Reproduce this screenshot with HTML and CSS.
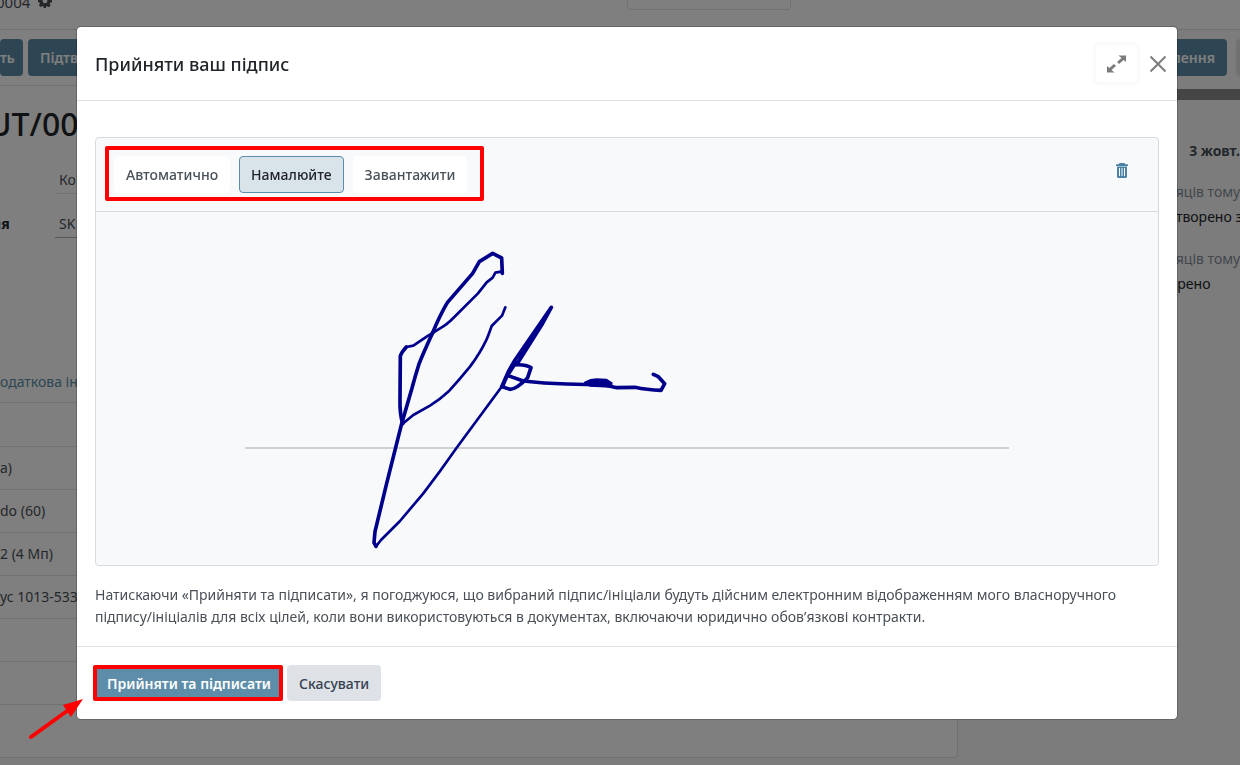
FILE: index.html
```html
<!DOCTYPE html>
<html lang="uk">
<head>
  <meta charset="UTF-8">
  <meta name="viewport" content="width=device-width, initial-scale=1.0">
  <title>Прийняти ваш підпис</title>
  <link rel="stylesheet" href="styles.css">
</head>
<body>

<div class="page">
  <header class="navbar">
    <div class="breadcrumb">
      <span>0004</span>
      <svg class="gear" viewBox="0 0 16 16" aria-hidden="true"><path fill-rule="evenodd" d="M6.6 0h2.8l.4 2.1 1.3.6L13 1.5l1.8 2-1.1 1.8.5 1.3 1.8.4v2.5l-2 .5-.6 1.3 1.1 1.9-2 1.9-1.8-1.2-1.3.5-.5 1.9H6.600l-.5-2-1.300-.5-1.900 1.100-1.900-2 1.200-1.800-.5-1.300L0 9.500V6.900l1.900-.4.6-1.300L1.300 3.400l2-1.900 1.800 1.200 1.200-.6zM8 5.300a2.700 2.700 0 1 0 0 5.400 2.700 2.700 0 0 0 0-5.400z"/></svg>
    </div>
    <div class="pager"></div>
  </header>

  <div class="columns">
    <main class="form">
      <div class="statusbar">
        <button class="btn btn-primary btn-cut">ть</button>
        <button class="btn btn-primary">Підтвердити</button>
      </div>
      <div class="sheet">
        <h1>UT/00</h1>
        <div class="fields">
          <span></span><span class="value light">Ко</span>
          <b>ня</b><span class="value">SK</span>
        </div>
        <div class="tabs"><a href="#">одаткова ін</a></div>
        <table class="lines">
          <tr><td></td></tr>
          <tr><td>а)</td></tr>
          <tr><td>do (60)</td></tr>
          <tr><td>2 (4 Мп)</td></tr>
          <tr><td>ус 1013-533</td></tr>
          <tr><td></td></tr>
          <tr><td></td></tr>
        </table>
      </div>
    </main>

    <aside class="chatter">
      <div class="chatter-top">
        <button class="btn btn-primary">повідомлення</button>
        <button class="btn btn-secondary">Нотатка</button>
      </div>
      <div class="thread">
        <div class="date">3 жовт.</div>
        <p class="ago">сяців тому</p>
        <p class="msg">створено з</p>
        <p class="ago">сяців тому</p>
        <p class="msg">орено</p>
      </div>
    </aside>
  </div>
</div>

<div class="overlay">
  <div class="modal" role="dialog" aria-labelledby="modal-title">
    <header class="modal-header">
      <h2 id="modal-title">Прийняти ваш підпис</h2>
      <button class="expand" aria-label="Розгорнути">
        <svg viewBox="0 0 20 18"><path d="M12 0h8v7l-2.500-2.200-4.800 4.200-2.200-2 4.800-4.300zM0 18v-7l2.500 2.200L7.300 9l2.200 2-4.800 4.300L8 18z"/></svg>
      </button>
      <button class="close" aria-label="Закрити">
        <svg viewBox="0 0 18 18"><path d="M1.500 1.500l15 15M16.500 1.500l-15 15"/></svg>
      </button>
    </header>

    <div class="modal-body">
      <div class="card">
        <div class="card-header">
          <div class="modes">
            <button class="mode">Автоматично</button>
            <button class="mode active">Намалюйте</button>
            <button class="mode">Завантажити</button>
          </div>
          <button class="trash" aria-label="Очистити">
            <svg viewBox="0 0 12 15"><path fill-rule="evenodd" d="M3.500 0h5l.8 1.200H12v1.700H0V1.200h2.700zM1 3.500h10v10c0 .9-.5 1.500-1.300 1.500H2.300C1.500 15 1 14.400 1 13.500zM3 5v8h1V5zm2.500 0v8h1V5zM8 5v8h1V5z"/></svg>
          </button>
        </div>
        <div class="canvas">
          <div class="baseline"></div>
          <svg class="signature" viewBox="-762 -54 3186 1059" role="img" aria-label="Підпис">
            <path d="M466 232L456 257 425 288Q412 325 408 332 390 370 360 410 330 447 298 482 270 508 240 527L190 555 158 581"/>
            <path class="thick" d="M158 581Q149 550 150 510L151 378Q155 366 169 351"/>
            <path d="M169 351L190 347 230 320 275 292Q290 284 310 264L384 190 410 157 428 143 436 128 457 124"/>
            <path class="thick" d="M457 130L455 84 428 70 388 95 368 130 292 218Q270 255 248 308"/>
            <path class="thick" d="M248 308Q215 380 207 402 195 440 185 478L155 581 110 760 75 905 72 938 78 949"/>
            <path d="M78 949L93 930 150 873 220 790Q270 725 320 653L455 470"/>
            <path class="thick" d="M455 470L475 425 495 390 604 232 575 285 505 396"/>
            <path class="thick" d="M492 405Q525 402 543 413L533 443Q500 477 480 478L457 470 470 440 498 397"/>
            <path class="thick" d="M474 437L520 453Q580 460 650 462L765 465 800 473 855 472Q890 480 933 481L944 461 925 440 910 433"/>
            <path class="blot" d="M706 458Q722 449 740 449L768 450 784 460 782 469 720 466z"/>
          </svg>
        </div>
      </div>
      <p class="terms">Натискаючи «Прийняти та підписати», я погоджуюся, що вибраний підпис/ініціали будуть дійсним електронним відображенням мого власноручного підпису/ініціалів для всіх цілей, коли вони використовуються в документах, включаючи юридично обов’язкові контракти.</p>
    </div>

    <footer class="modal-footer">
      <button class="btn btn-primary accept">Прийняти та підписати</button>
      <button class="btn btn-secondary">Скасувати</button>
      <svg class="arrow" viewBox="0 0 54 42" aria-hidden="true"><path class="shaft" d="M2 39L38 13"/><path d="M54 1L34 7l8 12z"/></svg>
    </footer>
  </div>
</div>

</body>
</html>
```
FILE: styles.css
```css
* { margin: 0; padding: 0; box-sizing: border-box; }

body {
  font-family: "Noto Sans", sans-serif;
  font-size: 14px;
  color: #495057;
  background: #f8f9fa;
  height: 100vh;
  overflow: hidden;
}

button {
  font: inherit;
  cursor: pointer;
}

.btn {
  height: 36px;
  padding: 0 12px;
  border: 0;
  border-radius: 4px;
  font-weight: 500;
  white-space: nowrap;
}

.btn-primary {
  background: #5d8da8;
  color: #fff;
  font-weight: 600;
}

.btn-secondary {
  background: #dee2e6;
  color: #374151;
}

/* form behind the dialog */
.page {
  height: 100vh;
  overflow: hidden;
}

.navbar {
  display: flex;
  height: 30px;
  background: #fff;
  border-bottom: 1px solid #dee2e6;
}

.breadcrumb {
  display: flex;
  gap: 8px;
  width: 627px;
  height: 14px;
  margin-left: -4px;
  line-height: 4px;
  font-size: 15px;
}

.gear {
  width: 14px;
  height: 14px;
  margin-top: -6px;
  fill: #495057;
}

.pager {
  width: 164px;
  height: 10px;
  margin-left: 4px;
  border: 1px solid #dee2e6;
  border-top: 0;
  border-radius: 0 0 4px 4px;
}

.columns {
  display: grid;
  grid-template-columns: 1fr 282px;
}

.form { overflow: hidden; }

.statusbar {
  display: flex;
  gap: 5px;
  height: 56px;
  padding-top: 9px;
  background: #fff;
  border-bottom: 1px solid #dee2e6;
}

.statusbar .btn, .chatter-top .btn { height: 37px; }

.statusbar .btn-cut {
  width: 23px;
  padding: 0;
  text-align: left;
}

.sheet {
  height: 672px;
  background: #fff;
  border: 1px solid #dee2e6;
  border-width: 0 1px 1px 0;
  border-radius: 0 0 4px 0;
}

.sheet h1 {
  padding-top: 16px;
  margin-left: -12px;
  font-size: 32px;
  line-height: 44px;
  font-weight: 500;
  color: #212529;
}

.fields {
  display: grid;
  grid-template-columns: 55px 1fr;
  row-gap: 16px;
  padding-top: 20px;
  line-height: 28px;
}

.fields b {
  margin-left: -8px;
  color: #212529;
}

.value {
  height: 28px;
  padding-left: 4px;
  border-bottom: 1px solid #adb5bd;
}

.value.light { border-color: #dee2e6; }

.tabs {
  height: 165px;
  padding-top: 133px;
  line-height: 22px;
  border-bottom: 1px solid #dee2e6;
}

.tabs a {
  color: #5d8da8;
  text-decoration: none;
}

.lines {
  width: 100%;
  border-collapse: collapse;
}

.lines td {
  height: 43px;
  border-bottom: 1px solid #dee2e6;
}

.chatter { overflow: hidden; }

.chatter-top {
  display: flex;
  gap: 9px;
  height: 70px;
  padding: 9px 0 0 144px;
  border-bottom: 11px solid #8a8a8a;
}

.thread { padding: 40px 0 0 211px; }

.date {
  display: flex;
  align-items: center;
  gap: 19px;
  font-weight: 700;
  line-height: 22px;
  white-space: nowrap;
}

.date::before {
  content: "";
  width: 29px;
  border-top: 1px solid #ced4da;
}

.thread p {
  line-height: 25px;
  white-space: nowrap;
}

.thread .ago {
  padding-top: 17px;
  color: #868e96;
}

.msg { color: #212529; }

/* dialog */
.overlay {
  position: fixed;
  inset: 0;
  display: flex;
  justify-content: center;
  align-items: flex-start;
  padding: 26px 0 0 14px;
  background: rgba(0, 0, 0, 0.5);
}

.modal {
  width: 100%;
  max-width: 1102px;
  background: #fff;
  background-clip: padding-box;
  border: 1px solid rgba(0, 0, 0, 0.2);
  border-radius: 5px;
}

.modal-header {
  display: flex;
  align-items: center;
  gap: 9px;
  height: 74px;
  padding: 0 10px 0 18px;
  border-bottom: 1px solid #dee2e6;
}

.modal-header h2 {
  flex: 1;
  font-size: 18px;
  font-weight: 500;
  color: #212529;
}

.expand {
  width: 47px;
  height: 43px;
  background: #fff;
  border: 3px solid #fafbfd;
  border-radius: 5px;
}

.expand svg {
  display: block;
  width: 19px;
  height: 18px;
  margin: auto;
  fill: #7c7c7c;
}

.close {
  width: 18px;
  height: 18px;
  background: none;
  border: 0;
}

.close svg {
  display: block;
  fill: none;
  stroke: #7c7c7c;
  stroke-width: 2;
}

.modal-body { padding: 36px 18px 18px; }

.card {
  background: #f8f9fb;
  border: 1px solid #d8dadd;
  border-radius: 4px;
}

.card-header {
  display: flex;
  justify-content: space-between;
  align-items: flex-start;
  padding: 18px;
  border-bottom: 1px solid #d8dadd;
}

.modes {
  position: relative;
  display: flex;
  gap: 9px;
}

/* red frame round the three modes */
.modes::after {
  content: "";
  position: absolute;
  inset: -10px -17px -8px -9px;
  border: 4px solid #f00;
  border-radius: 2px;
}

.mode {
  height: 37px;
  padding: 0 11px;
  background: #fff;
  border: 1px solid #fff;
  border-radius: 4px;
  color: #495057;
  font-weight: 500;
}

.mode.active {
  background: #d9e4ea;
  border-color: #5d8da8;
  color: #212529;
}

.trash {
  width: 36px;
  height: 29px;
  background: none;
  border: 0;
}

.trash svg {
  display: block;
  width: 12px;
  height: 15px;
  margin: auto;
  fill: #4c83a3;
}

.canvas {
  position: relative;
  height: 353px;
}

.baseline {
  position: absolute;
  left: 14%;
  right: 14%;
  bottom: 116px;
  height: 2px;
  background: #ced0d2;
}

.signature {
  position: relative;
  display: block;
  width: 100%;
  height: 100%;
  fill: none;
  stroke: #00008b;
  stroke-width: 8;
  stroke-linecap: round;
  stroke-linejoin: round;
}

.signature .thick { stroke-width: 11; }
.signature .blot { fill: #00008b; }

.terms {
  padding-top: 18px;
  line-height: 22px;
}

.modal-footer {
  position: relative;
  display: flex;
  gap: 4px;
  padding: 18px;
  border-top: 1px solid #dee2e6;
}

/* red frame and arrow on the accept button */
.accept {
  position: relative;
}

.accept::after {
  content: "";
  position: absolute;
  inset: 0 0 0 -2px;
  border: 4px solid #f00;
  border-radius: 2px;
}

.arrow {
  position: absolute;
  left: -48px;
  top: 51px;
  width: 54px;
  height: 42px;
  fill: #f00;
}

.arrow .shaft {
  stroke: #f00;
  stroke-width: 4;
  stroke-linecap: round;
}
```
